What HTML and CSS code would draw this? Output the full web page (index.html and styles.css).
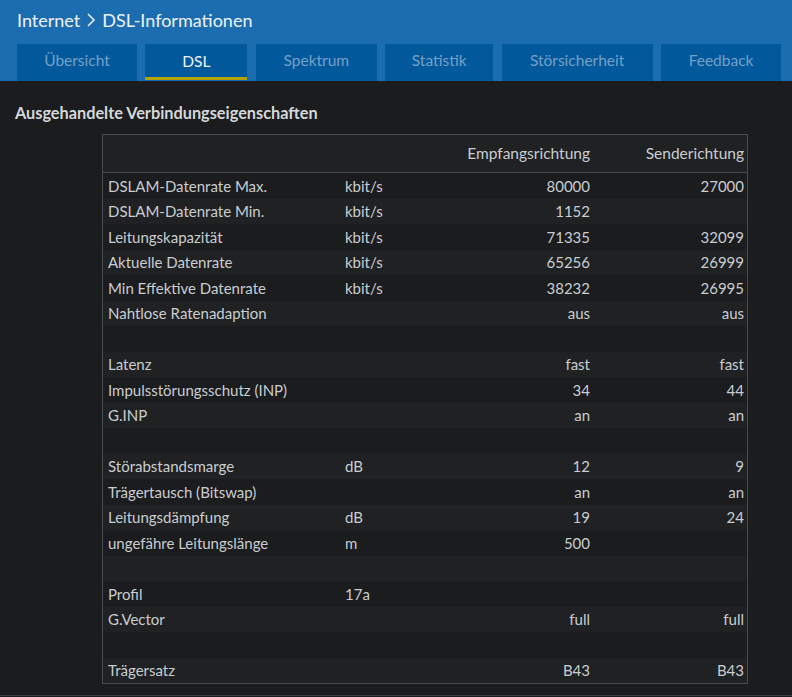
FILE: index.html
```html
<!DOCTYPE html>
<html lang="de">
<head>
<meta charset="utf-8">
<title>DSL-Informationen</title>
<link rel="stylesheet" href="styles.css">
</head>
<body>
<header class="top">
  <h1 class="crumb">
    <span>Internet</span>
    <svg class="chev" width="10" height="16" viewBox="0 0 10 16" aria-hidden="true"><path d="M2 2 L8 8 L2 14" fill="none" stroke="#e6ecf2" stroke-width="1.6"/></svg>
    <span>DSL-Informationen</span>
  </h1>
  <nav class="tabs">
    <a class="tab t1">Übersicht</a>
    <a class="tab t2 active">DSL</a>
    <a class="tab t3">Spektrum</a>
    <a class="tab t4">Statistik</a>
    <a class="tab t5">Störsicherheit</a>
    <a class="tab t6">Feedback</a>
  </nav>
</header>
<main class="content">
  <h2 class="section">Ausgehandelte Verbindungseigenschaften</h2>
  <div class="table">
    <div class="row head"><span class="c1"></span><span class="c2"></span><span class="c3">Empfangsrichtung</span><span class="c4">Senderichtung</span></div>
    <div class="row"><span class="c1">DSLAM-Datenrate Max.</span><span class="c2">kbit/s</span><span class="c3">80000</span><span class="c4">27000</span></div>
    <div class="row"><span class="c1">DSLAM-Datenrate Min.</span><span class="c2">kbit/s</span><span class="c3">1152</span><span class="c4"></span></div>
    <div class="row"><span class="c1">Leitungskapazität</span><span class="c2">kbit/s</span><span class="c3">71335</span><span class="c4">32099</span></div>
    <div class="row"><span class="c1">Aktuelle Datenrate</span><span class="c2">kbit/s</span><span class="c3">65256</span><span class="c4">26999</span></div>
    <div class="row"><span class="c1">Min Effektive Datenrate</span><span class="c2">kbit/s</span><span class="c3">38232</span><span class="c4">26995</span></div>
    <div class="row"><span class="c1">Nahtlose Ratenadaption</span><span class="c2"></span><span class="c3">aus</span><span class="c4">aus</span></div>
    <div class="row"><span class="c1"></span><span class="c2"></span><span class="c3"></span><span class="c4"></span></div>
    <div class="row"><span class="c1">Latenz</span><span class="c2"></span><span class="c3">fast</span><span class="c4">fast</span></div>
    <div class="row"><span class="c1">Impulsstörungsschutz (INP)</span><span class="c2"></span><span class="c3">34</span><span class="c4">44</span></div>
    <div class="row"><span class="c1">G.INP</span><span class="c2"></span><span class="c3">an</span><span class="c4">an</span></div>
    <div class="row"><span class="c1"></span><span class="c2"></span><span class="c3"></span><span class="c4"></span></div>
    <div class="row"><span class="c1">Störabstandsmarge</span><span class="c2">dB</span><span class="c3">12</span><span class="c4">9</span></div>
    <div class="row"><span class="c1">Trägertausch (Bitswap)</span><span class="c2"></span><span class="c3">an</span><span class="c4">an</span></div>
    <div class="row"><span class="c1">Leitungsdämpfung</span><span class="c2">dB</span><span class="c3">19</span><span class="c4">24</span></div>
    <div class="row"><span class="c1">ungefähre Leitungslänge</span><span class="c2">m</span><span class="c3">500</span><span class="c4"></span></div>
    <div class="row"><span class="c1"></span><span class="c2"></span><span class="c3"></span><span class="c4"></span></div>
    <div class="row"><span class="c1">Profil</span><span class="c2">17a</span><span class="c3"></span><span class="c4"></span></div>
    <div class="row"><span class="c1">G.Vector</span><span class="c2"></span><span class="c3">full</span><span class="c4">full</span></div>
    <div class="row"><span class="c1"></span><span class="c2"></span><span class="c3"></span><span class="c4"></span></div>
    <div class="row"><span class="c1">Trägersatz</span><span class="c2"></span><span class="c3">B43</span><span class="c4">B43</span></div>
  </div>
  <div class="footline"></div>
</main>
</body>
</html>
```

FILE: styles.css
```css
* { box-sizing: border-box; }
html, body { margin: 0; padding: 0; }
body {
  background: #1b1c1e;
  font-family: Lato, "Liberation Sans", sans-serif;
  color: #c9cdd0;
  width: 792px;
  height: 697px;
  overflow: hidden;
}
.top {
  background: #1c6db0;
  height: 81px;
  padding: 0 11px 0 17px;
  display: flex;
  flex-direction: column;
}
.crumb {
  margin: 0;
  height: 44px;
  padding-top: 9px;
  font-size: 18px;
  font-weight: 400;
  color: #eef2f6;
  display: flex;
  align-items: flex-start;
  gap: 6px;
  line-height: 22px;
}
.chev { margin-top: 3px; }
.tabs {
  display: flex;
  gap: 8.5px;
  height: 37px;
}
.tab {
  background: #01589a;
  color: #77a0c8;
  font-size: 15.5px;
  display: flex;
  justify-content: center;
  align-items: center;
  padding-bottom: 2px;
  border-bottom: 3px solid transparent;
}
.tab.active {
  color: #eef2f6;
  border-bottom-color: #b5a400;
  padding-bottom: 0;
  height: 36px;
}
.t1 { width: 120px; }
.t2 { width: 102px; }
.t3 { width: 121px; }
.t4 { width: 108px; }
.t5 { width: 151px; }
.t6 { width: 120px; }
.content {
  padding: 0;
}
.section {
  margin: 0;
  padding: 22px 0 0 15px;
  height: 53px;
  font-size: 16.3px;
  font-weight: 700;
  color: #d4d7da;
  line-height: 20px;
}
.table {
  margin-left: 102px;
  width: 646px;
  border: 1px solid #474c4f;
}
.row {
  display: grid;
  grid-template-columns: 237px 100px 154px 153px;
  height: 25.5px;
  align-items: center;
  font-size: 15px;
  background: #1f2123;
}
.row:nth-child(even) { background: #1b1c1e; }
.row.head {
  height: 38px;
  border-bottom: 1px solid #474c4f;
  background: #1f2123;
  padding-bottom: 1px;
}
.row.head .c3, .row.head .c4 { font-size: 15.5px; }
.c1 { padding-left: 5px; }
.c2 { padding-left: 5px; }
.c3 { text-align: right; padding-right: 4px; }
.c4 { text-align: right; padding-right: 3px; }
.footline {
  margin-top: 11px;
  border-top: 1px solid #3b3d40;
}
```
